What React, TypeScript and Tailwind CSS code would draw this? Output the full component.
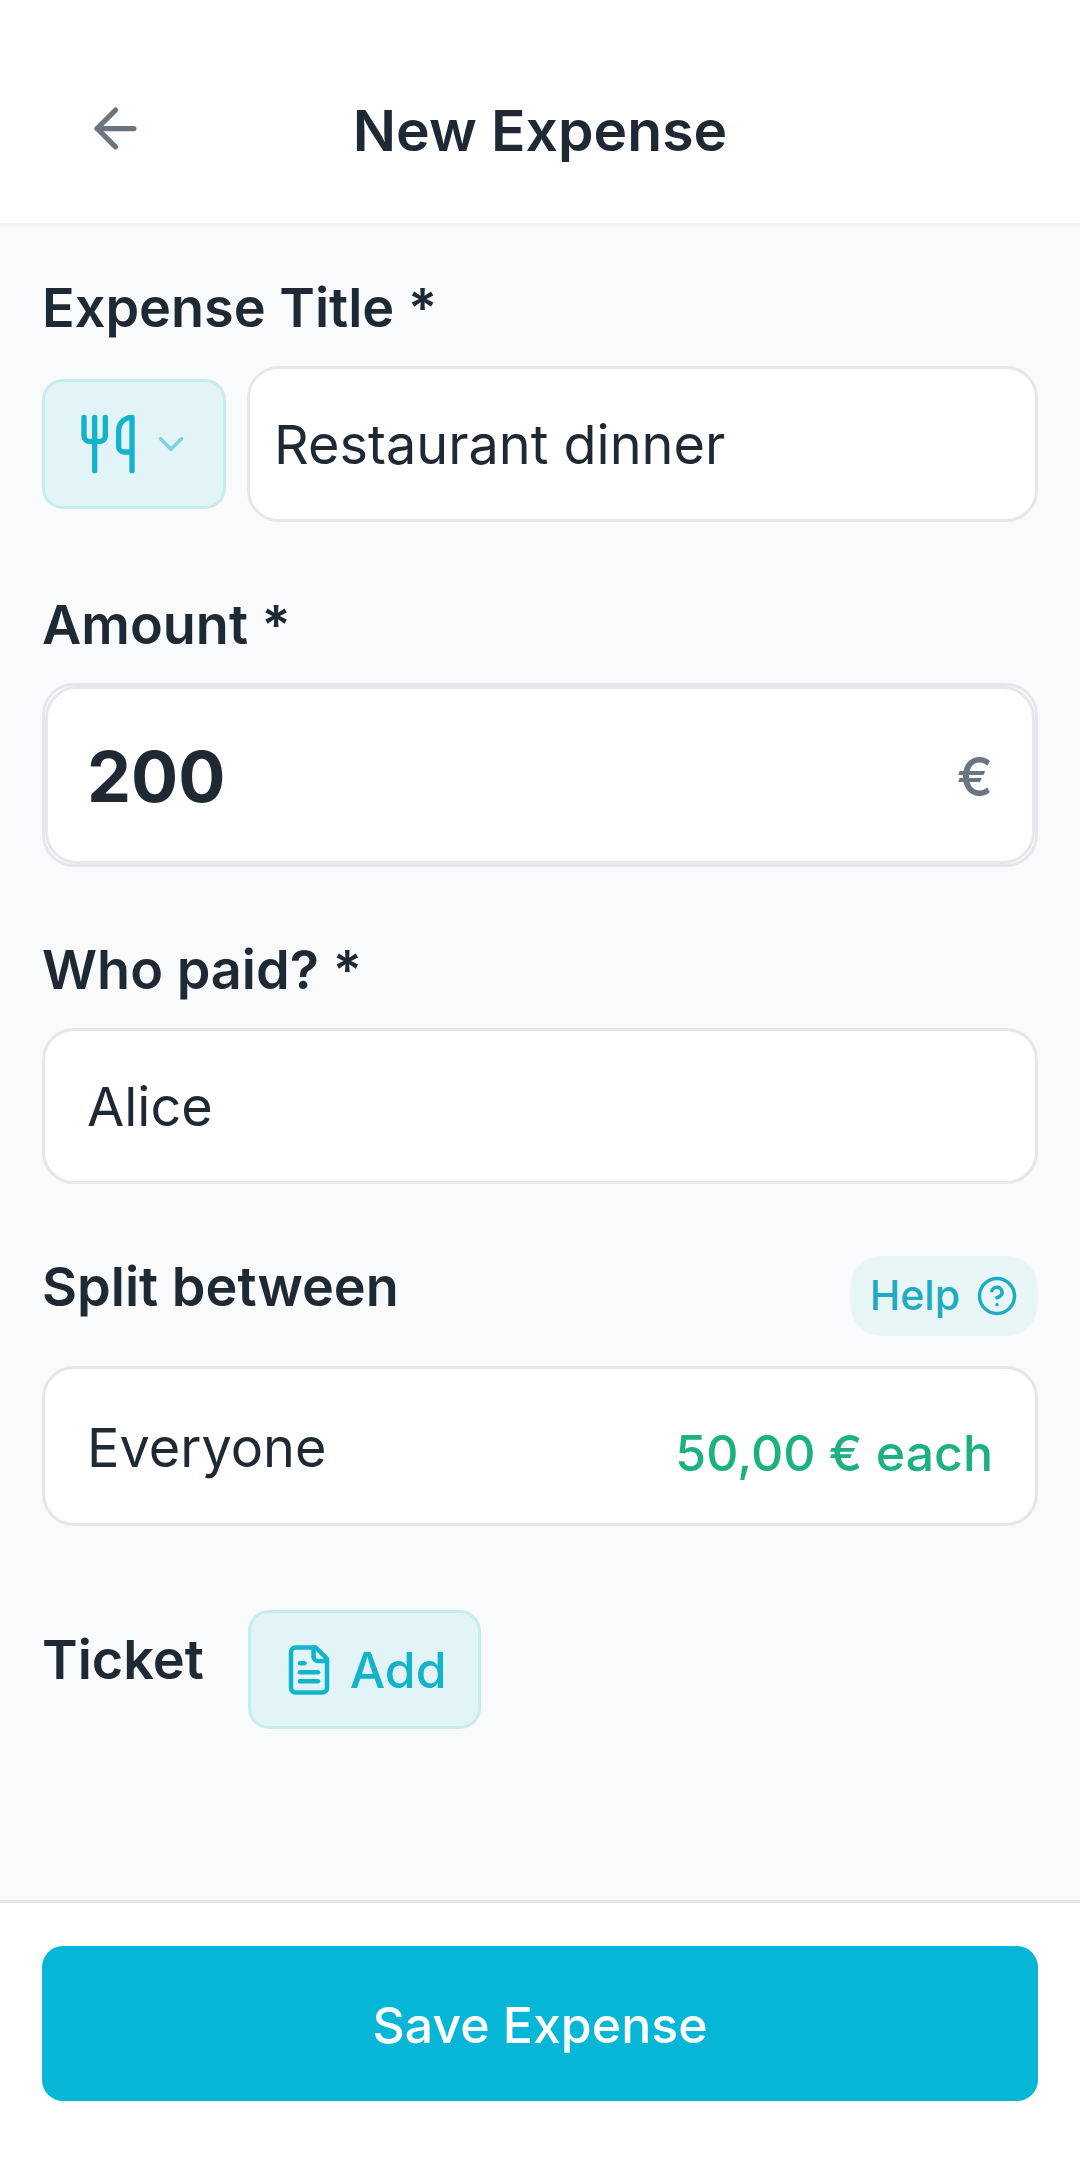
import type { ReactNode } from 'react';
import { ArrowLeft, ChevronDown } from 'lucide-react';

function Label({ children, htmlFor }: { children: ReactNode; htmlFor: string }) {
  return (
    <label htmlFor={htmlFor} className="block text-[54px] leading-[66px] font-semibold">
      {children}
    </label>
  );
}

function UtensilsIcon() {
  return (
    <svg width="64" height="64" viewBox="0 0 24 24" fill="none" stroke="currentColor" strokeWidth="2" strokeLinecap="round" strokeLinejoin="round" aria-hidden="true">
      <path d="M3 2v7c0 1.1.9 2 2 2h4a2 2 0 0 0 2-2V2" />
      <path d="M7 2v20" />
      <path d="M21 15V2a5 5 0 0 0-5 5v6c0 1.1.9 2 2 2h3Zm0 0v7" />
    </svg>
  );
}

function DocumentIcon() {
  return (
    <svg width="54" height="54" viewBox="0 0 24 24" fill="none" stroke="currentColor" strokeWidth="2" strokeLinecap="round" strokeLinejoin="round" aria-hidden="true">
      <path d="M15 2H6a2 2 0 0 0-2 2v16a2 2 0 0 0 2 2h12a2 2 0 0 0 2-2V7Z" />
      <path d="M14 2v4a2 2 0 0 0 2 2h4" />
      <path d="M10 9H8" />
      <path d="M16 13H8" />
      <path d="M16 17H8" />
    </svg>
  );
}

function HelpIcon() {
  return (
    <svg width="42" height="42" viewBox="0 0 24 24" fill="none" stroke="currentColor" strokeWidth="2" strokeLinecap="round" strokeLinejoin="round" aria-hidden="true">
      <circle cx="12" cy="12" r="10" />
      <path d="M9.09 9a3 3 0 0 1 5.83 1c0 2-3 3-3 3" />
      <path d="M12 17h.01" />
    </svg>
  );
}

export default function App() {
  return (
    <div className="flex min-h-screen flex-col bg-[#f8fafb] font-['Inter',sans-serif] text-[#1f2933]">
      <header className="grid grid-cols-[1fr_auto_1fr] items-start border-b-[3px] border-[#f1f3f5] bg-white px-[84px] pt-[91px] pb-[52px]">
        <button type="button" aria-label="Back" className="flex h-[74px] w-[63px] items-center text-[#6b7580]">
          <ArrowLeft size={63} strokeWidth={2} />
        </button>
        <h1 className="text-[57px] leading-[80px] font-semibold">New Expense</h1>
      </header>

      <main className="flex flex-1 flex-col gap-[70px] px-[42px] pt-[49px] pb-20">
        <section>
          <Label htmlFor="title">Expense Title *</Label>
          <div className="mt-[25px] flex items-center gap-[21px]">
            <button
              type="button"
              aria-label="Choose category"
              className="flex h-[130px] w-[184px] shrink-0 items-center justify-center gap-[10px] rounded-[21px] border-[3px] border-[#c8ebec] bg-[#e3f4f8] text-[#13b3ca]"
            >
              <UtensilsIcon />
              <ChevronDown size={42} strokeWidth={2} className="opacity-50" />
            </button>
            <input
              id="title"
              type="text"
              defaultValue="Restaurant dinner"
              className="h-[156px] min-w-0 flex-1 rounded-[32px] border-[3px] border-[#e5e7e9] bg-white px-6 text-[54px] outline-none"
            />
          </div>
        </section>

        <section>
          <Label htmlFor="amount">Amount *</Label>
          <div className="mt-[25px] rounded-[32px] border-[3px] border-[#e5e7eb] bg-white">
            <div className="flex h-[178px] items-center rounded-[32px] border-[3px] border-[#e5e7eb] px-[39px] pt-[2px]">
              <input
                id="amount"
                type="text"
                inputMode="decimal"
                defaultValue="200"
                className="min-w-0 flex-1 bg-transparent text-[70px] font-bold outline-none"
              />
              <span className="text-[54px] font-medium text-[#6b7580]">€</span>
            </div>
          </div>
        </section>

        <section>
          <Label htmlFor="payer">Who paid? *</Label>
          <button
            id="payer"
            type="button"
            className="mt-[25px] flex h-[156px] w-full items-center rounded-[32px] border-[3px] border-[#e5e7e9] bg-white px-[42px] text-[54px]"
          >
            Alice
          </button>
        </section>

        <section>
          <div className="flex h-[82px] items-start justify-between">
            <Label htmlFor="split">Split between</Label>
            <button
              type="button"
              className="flex h-20 items-center gap-4 self-end rounded-[32px] bg-[#e8f6f6] px-5 text-[41px] font-medium text-[#1fabc2]"
            >
              Help
              <HelpIcon />
            </button>
          </div>
          <button
            id="split"
            type="button"
            className="mt-[30px] flex h-[160px] w-full items-center justify-between rounded-[32px] border-[3px] border-[#e5e7e7] bg-white px-[42px] pt-[2px]"
          >
            <span className="text-[54px]">Everyone</span>
            <span className="pt-3 text-[50px] font-medium text-[#1db182]">50,00 € each</span>
          </button>
        </section>

        <section className="mt-[14px] flex items-center gap-11">
          <div className="pb-5">
            <Label htmlFor="ticket">Ticket</Label>
          </div>
          <button
            id="ticket"
            type="button"
            className="flex h-[119px] items-center gap-[14px] rounded-[21px] border-[3px] border-[#c8ebec] bg-[#e3f4f8] px-[31px] text-[50px] font-medium text-[#13b3ca]"
          >
            <DocumentIcon />
            <span className="pt-[2px]">Add</span>
          </button>
        </section>
      </main>

      <footer className="border-t-[3px] border-[#e5e7e9] bg-white px-[42px] pt-[43px] pb-[67px]">
        <button
          type="button"
          className="h-[155px] w-full rounded-[21px] bg-[#06b6d6] pt-1 text-[50px] font-medium text-white"
        >
          Save Expense
        </button>
      </footer>
    </div>
  );
}
